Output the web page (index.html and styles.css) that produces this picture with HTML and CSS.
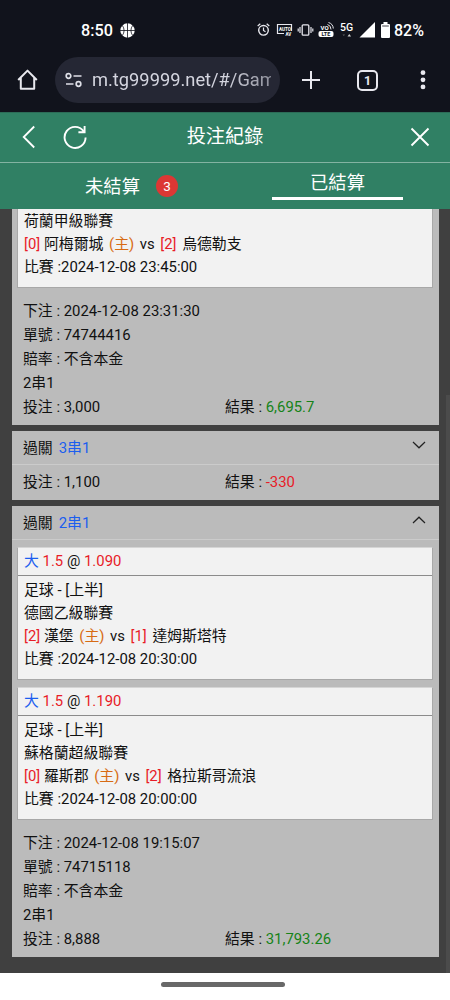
FILE: index.html
```html
<!DOCTYPE html>
<html lang="zh-Hant">
<head>
<meta charset="utf-8">
<title>投注紀錄</title>
<link rel="stylesheet" href="styles.css">
</head>
<body>
<div class="phone">
  <div class="status">
    <span class="clock">8:50</span>
    <svg class="ball" width="15" height="15" viewBox="0 0 15 15"><circle cx="7.5" cy="7.5" r="7.2" fill="#fff"/><path d="M7.5 0v15M0 7.5h15M2.2 2.2q3.8 5.3 0 10.6M12.8 2.2q-3.8 5.3 0 10.6" fill="none" stroke="#11131c" stroke-width=".8"/></svg>
    <svg class="tray" width="127" height="20" viewBox="0 0 127 20" fill="none" stroke="#e8e8ee">
      <circle cx="6.5" cy="10.3" r="4.8" stroke-width="1.4"/><path d="M6.5 7.5v3l2 1.2M.7 6l2.6-2.3M12.3 6L9.700 3.700" stroke-width="1.2"/>
      <path d="M27 13.500H20.500v-9h14v6.500" stroke-width="1.2"/>
      <text x="22" y="10.700" class="t-auto">AUTO</text><text x="28.500" y="16.300" class="t-av">AV</text>
      <rect x="45.200" y="4.800" width="6.600" height="10.400" rx="1" stroke-width="1.3"/><path d="M43 7v6M41.200 8.500v3M54 7v6M55.800 8.500v3" stroke-width="1.200"/>
      <rect x="61.500" y="11" width="15" height="6" rx="2" fill="#fff" stroke="none"/>
      <text x="64.500" y="16.200" class="t-lte">LTE</text><text x="63.500" y="10" class="t-vo">VO</text>
      <path d="M70.500 4.500q3.500 1 3.500 5M71.500 2.500q4.500 1.300 4.800 6" stroke-width="1"/>
      <text x="83" y="11" class="t-5g">5G</text>
      <path d="M90.500 16.500l1.800-2.500 1.800 2.500z" fill="#ccc" stroke="none"/><path d="M85.500 14.500h2.500l-1.200 1.500z" fill="#666" stroke="none"/>
      <path d="M118 2v15.500H102.500z" fill="#fff" stroke="none"/>
    </svg>
    <svg class="battery" width="9" height="16" viewBox="0 0 9 16"><path d="M2.500 0h4v2H8q1 0 1 1v12q0 1-1 1H1q-1 0-1-1V3q0-1 1-1h1.500z" fill="#fff"/><path d="M1.200 4h6.600" stroke="#11131c" stroke-width=".8"/></svg>
    <span class="percent">82%</span>
  </div>
  <div class="browser">
    <svg class="home" width="22" height="22" viewBox="0 0 22 22"><path d="M1.200 11L10.500 1.600 19.800 11M3.800 8.800v11h13.400v-11" fill="none" stroke="#e8e8ee" stroke-width="2" stroke-linejoin="round"/></svg>
    <div class="url">
      <svg width="18" height="16" viewBox="0 0 18 16" fill="none" stroke="#dfe0e8" stroke-width="1.700"><circle cx="3.500" cy="4" r="2.300"/><path d="M8.500 4H16.500M1 12h7.500"/><circle cx="13.500" cy="12" r="2.300"/></svg>
      <span class="address">m.tg99999.net/#/Gam</span>
    </div>
    <svg class="plus" width="20" height="20" viewBox="0 0 20 20"><path d="M10 1v18M1 10h18" stroke="#e8e8ee" stroke-width="2"/></svg>
    <span class="count">1</span>
    <svg class="dots" width="6" height="20" viewBox="0 0 6 20" fill="#e8e8ee"><circle cx="3" cy="2.700" r="2.400"/><circle cx="3" cy="9.800" r="2.400"/><circle cx="3" cy="16.900" r="2.400"/></svg>
  </div>
  <header class="head">
    <div class="head-left">
      <svg width="14" height="24" viewBox="0 0 14 24"><path d="M12.200 1.500L1.700 12l10.500 10.500" fill="none" stroke="#fff" stroke-width="1.800"/></svg>
      <svg width="24" height="24" viewBox="0 0 24 24" fill="none" stroke="#fff" stroke-width="1.900"><path d="M20.600 6.200A10.500 10.500 0 1 0 22.600 12.500M21.600 1v6.200h-6.200"/></svg>
    </div>
    <h1 class="title">投注紀錄</h1>
    <svg class="close" width="20" height="20" viewBox="0 0 20 20"><path d="M1.500 1.500l17 17M18.500 1.500l-17 17" stroke="#fff" stroke-width="1.900"/></svg>
  </header>
  <nav class="tabs">
    <div class="tab"><span class="label">未結算</span><span class="badge">3</span></div>
    <div class="tab"><span class="active">已結算</span></div>
  </nav>
  <main class="list">
    <section class="card">
      <div class="leg cut">
        <div class="leg-body">
          <p>荷蘭甲級聯賽</p>
          <p><span class="red">[0]</span> 阿梅爾城<span class="main">(主)</span>vs<span class="red away">[2]</span>烏德勒支</p>
          <p>比賽 :2024-12-08 23:45:00</p>
        </div>
      </div>
      <div class="summary">
        <p>下注 : 2024-12-08 23:31:30</p>
        <p>單號 : 74744416</p>
        <p>賠率 : 不含本金</p>
        <p>2串1</p>
        <p class="pair"><span>投注 : 3,000</span><span>結果 : <b class="green">6,695.7</b></span></p>
      </div>
    </section>
    <section class="card">
      <div class="card-head"><span>過關<b class="blue combo">3串1</b></span>
        <svg width="14" height="8" viewBox="0 0 14 8"><path d="M1 1l6 5.800L13 1" fill="none" stroke="#222" stroke-width="1.200"/></svg>
      </div>
      <p class="pair lone"><span>投注 : 1,100</span><span>結果 : <b class="red">-330</b></span></p>
    </section>
    <section class="card">
      <div class="card-head"><span>過關<b class="blue combo">2串1</b></span>
        <svg width="14" height="8" viewBox="0 0 14 8"><path d="M1 7l6-5.800L13 7" fill="none" stroke="#222" stroke-width="1.200"/></svg>
      </div>
      <div class="legs">
        <div class="leg">
          <div class="leg-head"><span class="blue">大</span> <span class="red">1.5</span> @ <span class="red">1.090</span></div>
          <div class="leg-body">
            <p>足球 - [上半]</p>
            <p>德國乙級聯賽</p>
            <p><span class="red">[2]</span> 漢堡<span class="main">(主)</span>vs<span class="red away">[1]</span>達姆斯塔特</p>
            <p>比賽 :2024-12-08 20:30:00</p>
          </div>
        </div>
        <div class="leg">
          <div class="leg-head"><span class="blue">大</span> <span class="red">1.5</span> @ <span class="red">1.190</span></div>
          <div class="leg-body">
            <p>足球 - [上半]</p>
            <p>蘇格蘭超級聯賽</p>
            <p><span class="red">[0]</span> 羅斯郡<span class="main">(主)</span>vs<span class="red away">[2]</span>格拉斯哥流浪</p>
            <p>比賽 :2024-12-08 20:00:00</p>
          </div>
        </div>
      </div>
      <div class="summary">
        <p>下注 : 2024-12-08 19:15:07</p>
        <p>單號 : 74715118</p>
        <p>賠率 : 不含本金</p>
        <p>2串1</p>
        <p class="pair"><span>投注 : 8,888</span><span>結果 : <b class="green">31,793.26</b></span></p>
      </div>
    </section>
    <div class="scrollbar"></div>
  </main>
  <div class="gesture"><span class="pill"></span></div>
</div>
</body>
</html>
```
FILE: styles.css
```css
* { box-sizing: border-box; }
body { margin: 0; background: #fff; }
p, h1 { margin: 0; }
b { font-weight: 400; }
.phone {
  width: 450px; height: 1000px; overflow: hidden;
  display: flex; flex-direction: column;
  font: 14.88px Roboto, "Noto Sans CJK TC", sans-serif;
  color: #111;
}
.status {
  height: 48px; flex: none; background: #11131c; color: #fff;
  display: flex; align-items: center; padding: 12px 0 0 81px;
}
.clock { font-size: 16.2px; font-weight: 500; width: 39px; }
.tray { margin-left: 122px; flex: none; }
.tray text { fill: #fff; stroke: none; font-weight: 700; }
.tray .t-auto { font-size: 4.600px; }
.tray .t-av { font-size: 4.500px; }
.tray .t-lte { font-size: 5.500px; fill: #11131c; }
.tray .t-vo { font-size: 6px; }
.tray .t-5g { font-size: 10.500px; font-weight: 500; }
.battery { margin-left: -3px; margin-right: 4px; flex: none; }
.percent { font-size: 16px; font-weight: 500; }
.browser {
  height: 64px; flex: none; background: #11131c;
  display: flex; align-items: center; padding-left: 17px;
}
.browser > * { flex: none; }
.url {
  width: 225px; height: 46px; margin-left: 16px; margin-right: 20.5px;
  border-radius: 23px; background: #252734;
  display: flex; align-items: center; padding: 0 9px 0 10px; gap: 9px;
}
.url svg { flex: none; }
.address {
  flex: 1; overflow: hidden; white-space: nowrap;
  color: #d4d5df; font-size: 18.300px; line-height: 30px;
  -webkit-mask-image: linear-gradient(90deg, #000 75%, rgba(0,0,0,.6));
  mask-image: linear-gradient(90deg, #000 75%, rgba(0,0,0,.6));
}
.count {
  width: 21px; height: 21px; margin-left: 36.5px; margin-right: 41.5px;
  border: 2px solid #e8e8ee; border-radius: 5px; color: #e8e8ee;
  font-size: 12.500px; font-weight: 700; line-height: 17px; text-align: center;
}
.head {
  height: 51px; flex: none; background: #308064; color: #fff;
  border-top: 1px solid #2c6c57; border-bottom: 1px solid #83b3a2;
  display: grid; grid-template-columns: 1fr auto 1fr; align-items: center;
  padding: 0 20px 2px 22px;
}
.head-left { display: flex; gap: 27px; }
.title { font-size: 19.200px; font-weight: 400; line-height: 28px; margin-right: 2px; }
.close { justify-self: end; }
.tabs {
  height: 46px; flex: none; background: #308064; color: #fff;
  display: grid; grid-template-columns: 1fr 1fr; font-size: 18.300px;
}
.tab { display: flex; justify-content: center; align-items: center; }
.tab:first-child { padding-left: 38px; }
.label { padding-bottom: 3px; }
.badge {
  width: 22px; height: 22px; margin-left: 16px; border-radius: 50%;
  background: #dc3734; font-size: 13.500px; line-height: 22px; text-align: center;
}
.active {
  width: 131px; height: 37px; border-bottom: 3px solid #fff;
  line-height: 39px; text-align: center;
}
.tab:last-child { align-items: flex-start; }
.list {
  position: relative; height: 763.500px; flex: none; overflow: hidden;
  padding: 0 11px 0 12px; background: #404040;
  display: flex; flex-direction: column; gap: 6px;
}
.card { flex: none; background: #bbb; }
.card-head {
  height: 34px; border-bottom: 1px solid #cbcbcb;
  display: flex; align-items: center; justify-content: space-between;
  padding: 0 13px 3px 11px;
}
.card-head svg { margin-bottom: 2px; }
.combo { margin-left: 6px; }
.legs {
  padding: 7px 6px 0 5px;
  display: flex; flex-direction: column; gap: 7px;
}
.leg { background: #f2f2f2; border: 1px solid #a8a8a8; border-top-color: #d5d5d5; }
.leg-head {
  height: 28px; border-bottom: 1px solid #8b8b8b;
  padding-left: 6px; line-height: 27px;
}
.leg-body { padding: 3px 0 8px 6px; }
.leg-body p { height: 23px; line-height: 23px; white-space: nowrap; }
.cut { margin: 0 6px 0 5px; border-top: 0; }
.cut .leg-body { padding-top: 1px; padding-bottom: 8px; }
.main { color: #d76b14; margin: 0 5.6px; }
.away { margin: 0 5.6px; }
.summary { padding: 11px 11px 6px; }
.summary p { height: 24px; line-height: 24px; }
.pair { display: grid; grid-template-columns: 202px 1fr; }
.lone { height: 35px; line-height: 35px; padding: 0 11px; }
.red { color: #e81c28; }
.green { color: #168318; }
.blue { color: #1c5eef; }
.scrollbar {
  position: absolute; right: 0; top: 186px; bottom: 0; width: 4px;
  background: #4b4b4b;
}
.gesture { flex: 1; background: #fff; display: flex; justify-content: center; padding-top: 9.5px; padding-right: 4px; }
.pill { width: 124px; height: 5px; border-radius: 3px; background: #686868; }
```
